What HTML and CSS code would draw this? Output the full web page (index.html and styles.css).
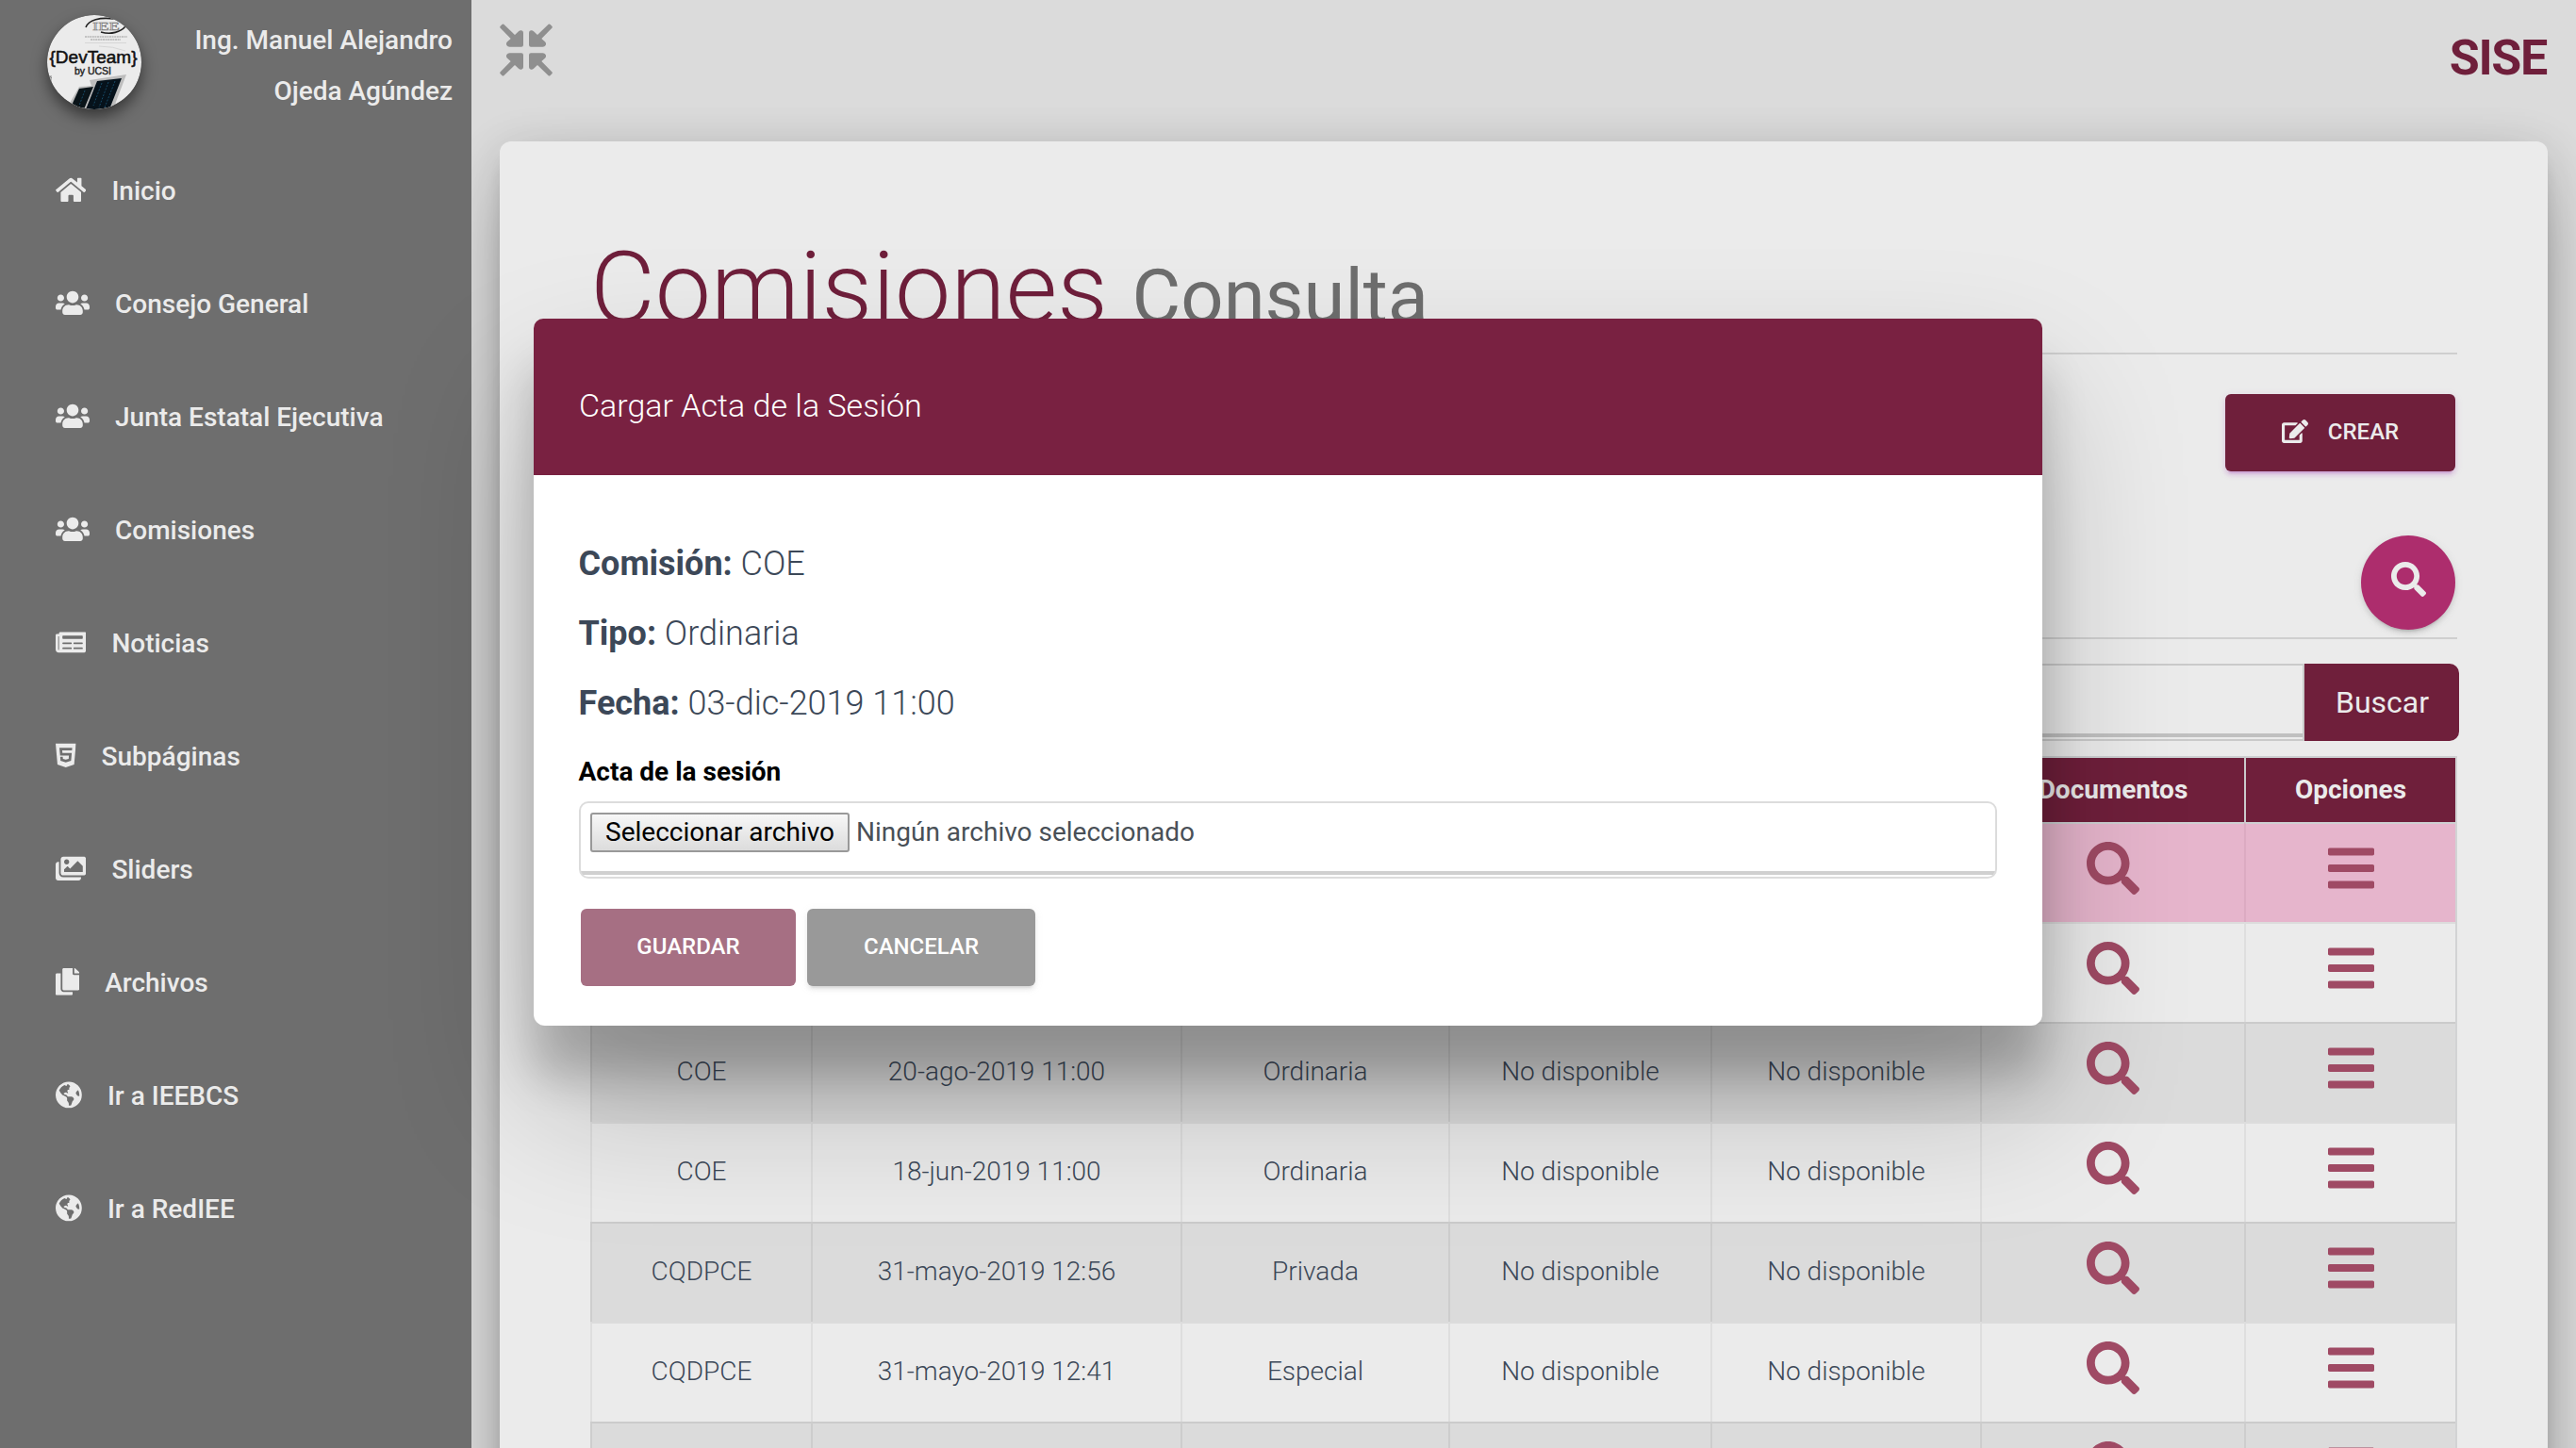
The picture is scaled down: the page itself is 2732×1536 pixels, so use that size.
FILE: index.html
```html
<!DOCTYPE html>
<html lang="es">
<head>
<meta charset="utf-8">
<title>SISE - Comisiones</title>
<link rel="stylesheet" href="styles.css">
</head>
<body>
<svg class="sprite" xmlns="http://www.w3.org/2000/svg">
  <symbol id="home" viewBox="0 0 576 512"><path d="M280.37 148.26L96 300.11V464a16 16 0 0 0 16 16l112.06-.29a16 16 0 0 0 15.92-16V368a16 16 0 0 1 16-16h64a16 16 0 0 1 16 16v95.64a16 16 0 0 0 16 16.05L464 480a16 16 0 0 0 16-16V300L295.67 148.26a12.19 12.19 0 0 0-15.3 0zM571.6 251.47L488 182.56V44.05a12 12 0 0 0-12-12h-56a12 12 0 0 0-12 12v72.61L318.47 43a48 48 0 0 0-61 0L4.34 251.47a12 12 0 0 0-1.6 16.9l25.5 31A12 12 0 0 0 45.15 301l235.22-193.74a12.19 12.19 0 0 1 15.3 0L530.9 301a12 12 0 0 0 16.9-1.6l25.5-31a12 12 0 0 0-1.7-16.93z"/></symbol>
  <symbol id="users" viewBox="0 0 640 512"><path d="M96 224c35.3 0 64-28.7 64-64s-28.7-64-64-64-64 28.7-64 64 28.7 64 64 64zm448 0c35.3 0 64-28.7 64-64s-28.7-64-64-64-64 28.7-64 64 28.7 64 64 64zm32 32h-64c-17.6 0-33.5 7.1-45.1 18.6 40.3 22.1 68.9 62 75.1 109.4h66c17.7 0 32-14.3 32-32v-32c0-35.3-28.7-64-64-64zm-256 0c61.9 0 112-50.1 112-112S381.9 32 320 32 208 82.1 208 144s50.1 112 112 112zm76.8 32h-8.3c-20.8 10-43.9 16-68.5 16s-47.6-6-68.5-16h-8.3C179.6 288 128 339.6 128 403.2V432c0 26.5 21.5 48 48 48h288c26.5 0 48-21.5 48-48v-28.8c0-63.6-51.6-115.2-115.2-115.2zm-223.7-13.4C161.5 263.1 145.6 256 128 256H64c-35.3 0-64 28.7-64 64v32c0 17.7 14.3 32 32 32h65.9c6.3-47.4 34.9-87.3 75.2-109.4z"/></symbol>
  <symbol id="news" viewBox="0 0 576 512"><path d="M552 64H88c-13.255 0-24 10.745-24 24v8H24c-13.255 0-24 10.745-24 24v272c0 30.928 25.072 56 56 56h472c26.51 0 48-21.49 48-48V88c0-13.255-10.745-24-24-24zM56 400a8 8 0 0 1-8-8V144h16v248a8 8 0 0 1-8 8zm236-16H140c-6.627 0-12-5.373-12-12v-8c0-6.627 5.373-12 12-12h152c6.627 0 12 5.373 12 12v8c0 6.627-5.373 12-12 12zm208 0H348c-6.627 0-12-5.373-12-12v-8c0-6.627 5.373-12 12-12h152c6.627 0 12 5.373 12 12v8c0 6.627-5.373 12-12 12zm-208-96H140c-6.627 0-12-5.373-12-12v-8c0-6.627 5.373-12 12-12h152c6.627 0 12 5.373 12 12v8c0 6.627-5.373 12-12 12zm208 0H348c-6.627 0-12-5.373-12-12v-8c0-6.627 5.373-12 12-12h152c6.627 0 12 5.373 12 12v8c0 6.627-5.373 12-12 12zm0-96H140c-6.627 0-12-5.373-12-12v-40c0-6.627 5.373-12 12-12h360c6.627 0 12 5.373 12 12v40c0 6.627-5.373 12-12 12z"/></symbol>
  <symbol id="html5" viewBox="0 0 384 512"><path d="M0 32l34.9 395.8L191.5 480l157.6-52.2L384 32H0zm308.2 127.9H124.4l4.1 49.4h175.6l-13.6 148.4-97.9 27v.3h-1.1l-98.7-27.3-6-75.8h47.7L138 320l53.5 14.5 53.7-14.5 6-62.2H84.3L71.5 112.2h241.1l-4.4 47.7z"/></symbol>
  <symbol id="images" viewBox="0 0 576 512"><path d="M480 416v16c0 26.51-21.49 48-48 48H48c-26.51 0-48-21.49-48-48V176c0-26.51 21.49-48 48-48h16v208c0 44.112 35.888 80 80 80h336zm96-80V80c0-26.51-21.49-48-48-48H144c-26.51 0-48 21.49-48 48v256c0 26.51 21.49 48 48 48h384c26.51 0 48-21.49 48-48zM256 128c0 26.51-21.49 48-48 48s-48-21.49-48-48 21.49-48 48-48 48 21.49 48 48zm-96 144l55.515-55.515c4.686-4.686 12.284-4.686 16.971 0L272 256l135.515-135.515c4.686-4.686 12.284-4.686 16.971 0L512 208v112H160v-48z"/></symbol>
  <symbol id="copy" viewBox="0 0 448 512"><path d="M320 448v40c0 13.255-10.745 24-24 24H24c-13.255 0-24-10.745-24-24V120c0-13.255 10.745-24 24-24h72v296c0 30.879 25.121 56 56 56h168zm0-344V0H152c-13.255 0-24 10.745-24 24v368c0 13.255 10.745 24 24 24h272c13.255 0 24-10.745 24-24V128H344c-13.2 0-24-10.8-24-24zm120.971-31.029L375.029 7.029A24 24 0 0 0 358.059 0H352v96h96v-6.059a24 24 0 0 0-7.029-16.97z"/></symbol>
  <symbol id="globe" viewBox="0 0 496 512"><path d="M248 8C111.03 8 0 119.03 0 256s111.03 248 248 248 248-111.03 248-248S384.97 8 248 8zm82.29 357.6c-3.9 3.88-7.99 7.95-11.31 11.28-2.99 3-5.1 6.7-6.17 10.71-1.51 5.66-2.73 11.38-4.77 16.87l-17.39 46.85c-13.76 3-28 4.69-42.65 4.69v-27.38c1.69-12.62-7.64-36.26-22.63-51.25-6-6-9.37-14.14-9.37-22.63v-32.01c0-11.64-6.27-22.34-16.46-27.97-14.37-7.95-34.81-19.06-48.81-26.11-11.48-5.78-22.1-13.14-31.65-21.75l-.8-.72a114.792 114.792 0 0 1-18.06-20.74c-9.38-13.77-24.66-36.42-34.59-51.14 20.47-45.5 57.36-82.04 103.2-101.89l24.01 12.01C203.48 89.74 216 82.01 216 70.11v-11.3c7.99-1.29 16.12-2.11 24.39-2.42l28.3 28.3c6.25 6.25 6.25 16.38 0 22.63L264 112l-10.34 10.34c-3.12 3.12-3.12 8.19 0 11.31l4.69 4.69c3.12 3.12 3.12 8.19 0 11.31l-8 8a8.008 8.008 0 0 1-5.66 2.34h-8.99c-2.08 0-4.08.81-5.58 2.27l-9.92 9.65a8.008 8.008 0 0 0-1.58 9.31l15.59 31.19c2.66 5.32-1.21 11.58-7.15 11.58h-5.64c-1.93 0-3.79-.7-5.24-1.96l-9.28-8.06a16.017 16.017 0 0 0-15.55-3.1l-31.17 10.39a11.95 11.95 0 0 0-8.17 11.34c0 4.53 2.56 8.66 6.61 10.69l11.08 5.54c9.41 4.71 19.79 7.16 30.31 7.16s22.59 27.29 32 32h66.75c8.49 0 16.62 3.37 22.63 9.37l13.69 13.69a30.503 30.503 0 0 1 8.93 21.57 46.536 46.536 0 0 1-13.72 32.98zM417 274.25c-5.79-1.45-10.84-5-14.15-9.97l-17.98-26.97a23.97 23.97 0 0 1 0-26.62l19.59-29.38c2.32-3.47 5.5-6.29 9.24-8.15l12.98-6.49C440.2 193.59 448 223.87 448 256c0 8.67-.74 17.16-1.82 25.54L417 274.25z"/></symbol>
  <symbol id="search" viewBox="0 0 512 512"><path d="M505 442.7L405.3 343c-4.5-4.5-10.6-7-17-7H372c27.6-35.3 44-79.7 44-128C416 93.1 322.9 0 208 0S0 93.1 0 208s93.1 208 208 208c48.3 0 92.7-16.4 128-44v16.3c0 6.4 2.5 12.5 7 17l99.7 99.7c9.4 9.4 24.6 9.4 33.9 0l28.3-28.3c9.4-9.4 9.4-24.6.1-34zM208 336c-70.7 0-128-57.2-128-128 0-70.7 57.2-128 128-128 70.7 0 128 57.2 128 128 0 70.7-57.2 128-128 128z"/></symbol>
  <symbol id="bars" viewBox="0 0 448 512"><path d="M16 132h416c8.837 0 16-7.163 16-16V76c0-8.837-7.163-16-16-16H16C7.163 60 0 67.163 0 76v40c0 8.837 7.163 16 16 16zm0 160h416c8.837 0 16-7.163 16-16v-40c0-8.837-7.163-16-16-16H16c-8.837 0-16 7.163-16 16v40c0 8.837 7.163 16 16 16zm0 160h416c8.837 0 16-7.163 16-16v-40c0-8.837-7.163-16-16-16H16c-8.837 0-16 7.163-16 16v40c0 8.837 7.163 16 16 16z"/></symbol>
  <symbol id="edit" viewBox="0 0 576 512"><path d="M402.6 83.2l90.2 90.2c3.8 3.8 3.8 10 0 13.8L274.4 405.6l-92.8 10.3c-12.4 1.4-22.9-9.1-21.5-21.5l10.3-92.8L388.8 83.2c3.8-3.8 10-3.8 13.8 0zm162-22.9l-48.8-48.8c-15.2-15.2-39.9-15.2-55.2 0l-35.4 35.4c-3.8 3.8-3.8 10 0 13.8l90.2 90.2c3.8 3.8 10 3.8 13.8 0l35.4-35.4c15.2-15.3 15.2-40 0-55.2zM384 346.2V448H64V128h229.8c3.2 0 6.2-1.3 8.5-3.5l40-40c7.6-7.6 2.2-20.5-8.5-20.5H48C21.5 64 0 85.5 0 112v352c0 26.5 21.5 48 48 48h352c26.5 0 48-21.5 48-48V306.2c0-10.7-12.9-16-20.5-8.5l-40 40c-2.2 2.3-3.5 5.3-3.5 8.5z"/></symbol>
  <symbol id="compress" viewBox="0 0 168 168">
    <g id="arrow"><path d="M13 2Q10 0 7 3L2 8Q-1 11 2 14L35 48L24 58Q19 63 22 69Q25 74 31 74H69Q75 74 75 68V29Q75 23 69 22Q64 21 60 25L48 36Z"/></g>
    <use href="#arrow" transform="matrix(-1 0 0 1 168 0)"/>
    <use href="#arrow" transform="matrix(1 0 0 -1 0 168)"/>
    <use href="#arrow" transform="matrix(-1 0 0 -1 168 168)"/>
  </symbol>
</svg>

<div class="app">
  <aside class="sidebar">
    <div class="user">
      <svg class="avatar" viewBox="0 0 100 100">
        <defs><clipPath id="round"><circle cx="50" cy="50" r="50"/></clipPath></defs>
        <g clip-path="url(#round)">
          <rect width="100" height="100" fill="#ebebeb"/>
          <path d="M41 13c3-8 15-11 30-9M57 18c11 3 21 0 26-6" fill="none" stroke="#222" stroke-width="1.6"/>
          <text x="48" y="16" class="mini-logo" textLength="29" lengthAdjust="spacingAndGlyphs">IEE</text>
          <path d="M40 23h45M46 26h32" stroke="#999" stroke-width="1.2" stroke-dasharray="2 .6"/>
          <path d="M40 29.500h44M55 33q15 0 28 5" stroke="#d6d6d6" fill="none"/>
          <path d="M0 62l5 5M4 64v8" stroke="#888" fill="none"/>
          <path d="M45 69L84 63 70 100H20L34 76l13-1z" fill="#bdbdbd"/>
          <path d="M34 78l15-2-10 24H24z" fill="#0a1419"/>
          <path d="M53 70l26-3-13 33H41z" fill="#06121b"/>
          <path d="M58 72l-9 24M65 71l-10 27M72 70L61 98M40 80l-6 16" stroke="#174a66" stroke-width="1" stroke-dasharray="2 1.500"/>
          <text x="2.500" y="51" class="team" textLength="93" lengthAdjust="spacingAndGlyphs">{DevTeam}</text>
          <text x="29" y="63" class="team-by" textLength="39" lengthAdjust="spacingAndGlyphs">by UCSI</text>
        </g>
      </svg>
      <div class="user-name">Ing. Manuel Alejandro<br>Ojeda Agúndez</div>
    </div>
    <nav class="menu">
      <a><svg class="w576"><use href="#home"/></svg>Inicio</a>
      <a><svg class="w640"><use href="#users"/></svg>Consejo General</a>
      <a><svg class="w640"><use href="#users"/></svg>Junta Estatal Ejecutiva</a>
      <a><svg class="w640"><use href="#users"/></svg>Comisiones</a>
      <a><svg class="w576"><use href="#news"/></svg>Noticias</a>
      <a><svg class="w384"><use href="#html5"/></svg>Subpáginas</a>
      <a><svg class="w576"><use href="#images"/></svg>Sliders</a>
      <a><svg class="w448"><use href="#copy"/></svg>Archivos</a>
      <a><svg class="w496"><use href="#globe"/></svg>Ir a IEEBCS</a>
      <a><svg class="w496"><use href="#globe"/></svg>Ir a RedIEE</a>
    </nav>
  </aside>

  <main class="main">
    <header class="topbar">
      <svg class="toggle"><use href="#compress"/></svg>
      <span class="brand">SISE</span>
    </header>
    <section class="card">
      <h1 class="heading">Comisiones <small>Consulta</small></h1>
      <div class="actions">
        <button class="btn create"><svg><use href="#edit"/></svg>CREAR</button>
        <button class="round-btn"><svg><use href="#search"/></svg></button>
      </div>
      <div class="search">
        <div class="field"></div>
        <button class="search-btn">Buscar</button>
      </div>
      <table class="grid">
        <colgroup><col class="c1"><col class="c2"><col class="c3"><col class="c4"><col class="c5"><col class="c6"><col class="c7"></colgroup>
        <thead><tr><th></th><th></th><th></th><th></th><th></th><th>Documentos</th><th>Opciones</th></tr></thead>
        <tbody>
          <tr class="pink"><td></td><td></td><td></td><td></td><td></td><td><svg class="lens"><use href="#search"/></svg></td><td><svg class="lines"><use href="#bars"/></svg></td></tr>
          <tr><td></td><td></td><td></td><td></td><td></td><td><svg class="lens"><use href="#search"/></svg></td><td><svg class="lines"><use href="#bars"/></svg></td></tr>
          <tr class="gray"><td>COE</td><td>20-ago-2019 11:00</td><td>Ordinaria</td><td>No disponible</td><td>No disponible</td><td><svg class="lens"><use href="#search"/></svg></td><td><svg class="lines"><use href="#bars"/></svg></td></tr>
          <tr><td>COE</td><td>18-jun-2019 11:00</td><td>Ordinaria</td><td>No disponible</td><td>No disponible</td><td><svg class="lens"><use href="#search"/></svg></td><td><svg class="lines"><use href="#bars"/></svg></td></tr>
          <tr class="gray"><td>CQDPCE</td><td>31-mayo-2019 12:56</td><td>Privada</td><td>No disponible</td><td>No disponible</td><td><svg class="lens"><use href="#search"/></svg></td><td><svg class="lines"><use href="#bars"/></svg></td></tr>
          <tr><td>CQDPCE</td><td>31-mayo-2019 12:41</td><td>Especial</td><td>No disponible</td><td>No disponible</td><td><svg class="lens"><use href="#search"/></svg></td><td><svg class="lines"><use href="#bars"/></svg></td></tr>
          <tr class="gray"><td></td><td></td><td></td><td></td><td></td><td><svg class="lens"><use href="#search"/></svg></td><td><svg class="lines"><use href="#bars"/></svg></td></tr>
        </tbody>
      </table>
    </section>
  </main>

  <div class="modal">
    <div class="modal-head">Cargar Acta de la Sesión</div>
    <div class="modal-body">
      <p><b>Comisión:</b> COE</p>
      <p><b>Tipo:</b> Ordinaria</p>
      <p><b>Fecha:</b> 03-dic-2019 11:00</p>
      <label class="label">Acta de la sesión</label>
      <div class="file"><span class="file-btn">Seleccionar archivo</span><span>Ningún archivo seleccionado</span></div>
      <div class="buttons">
        <button class="btn save">GUARDAR</button>
        <button class="btn cancel">CANCELAR</button>
      </div>
    </div>
  </div>
</div>
</body>
</html>
```
FILE: styles.css
```css
* { box-sizing: border-box; }
html, body { margin: 0; height: 1536px; overflow: hidden; }
body { font: 300 28px/1.5 Roboto, sans-serif; color: #3c4858; background: #dbdbdb; }
button { border: 0; padding: 0; margin: 0; font: inherit; }
svg { fill: currentColor; display: block; flex: none; }
.sprite { display: none; }

.app { position: relative; display: flex; width: 2732px; height: 1536px; overflow: hidden; }

/* Sidebar */
.sidebar { position: relative; z-index: 1; width: 500px; flex: none; background: #6e6e6e; color: #ebebeb; font-weight: 500; }
.user { display: flex; justify-content: space-between; height: 143px; padding: 16px 20px 0 50px; }
.avatar { width: 100px; height: 100px; border-radius: 50%; box-shadow: 0 8px 16px rgba(0, 0, 0, .5); }
.team { font: 17.5px "Liberation Sans", sans-serif; fill: #111; stroke: #111; stroke-width: .5px; }
.team-by { font: 10px "Liberation Sans", sans-serif; fill: #222; stroke: #222; stroke-width: .4px; }
.mini-logo { font: 13px "Liberation Serif", serif; fill: #ddd; stroke: #777; stroke-width: .5px; }
.user-name { line-height: 54px; text-align: right; }
.menu a { display: flex; align-items: center; gap: 27px; height: 120px; padding-left: 59px; }
.menu svg { height: 28.8px; margin-bottom: 3px; }
.w640 { width: 36px; }
.w576 { width: 32.4px; }
.w496 { width: 27.9px; }
.w448 { width: 25.2px; }
.w384 { width: 21.6px; }

/* Page */
.main { flex: 1; padding: 0 30px; }
.topbar { display: flex; justify-content: space-between; height: 150px; }
.toggle { width: 56px; height: 56px; margin-top: 25px; color: #8f8f8f; }
.brand { font-size: 52px; line-height: 60px; margin: 32px 1px 0 0; font-weight: 700; letter-spacing: -1.3px; color: #6f1f3b; }
.card {
  height: 1500px; padding: 93px 96px 0; border-radius: 12px; background: #ebebeb;
  box-shadow: 0 32px 76px -24px rgba(0, 0, 0, .44), 0 8px 50px rgba(0, 0, 0, .12), 0 16px 20px -10px rgba(0, 0, 0, .2);
}
.heading { margin: 0; height: 133px; font-size: 105.8px; line-height: 126px; font-weight: 300; color: #6f1f3b; border-bottom: 2px solid #cfcfcf; }
.heading small { font-size: 79.5px; font-weight: 400; color: #6e6e6e; }
.actions { display: flex; flex-direction: column; align-items: flex-end; height: 302px; padding: 42px 2px 0 0; border-bottom: 2px solid #cfcfcf; }
.btn { display: flex; align-items: center; justify-content: center; height: 82px; padding-bottom: 3px; border-radius: 6px; font-size: 24px; font-weight: 500; color: #fff; }
.create {
  width: 244px; gap: 21px; background: #6f1f3b; color: #ebebeb;
  box-shadow: 0 4px 4px rgba(156, 39, 176, .14), 0 6px 2px -4px rgba(156, 39, 176, .2), 0 2px 10px rgba(156, 39, 176, .12);
}
.create svg { width: 28px; height: 25px; }
.round-btn {
  display: flex; align-items: center; justify-content: center; width: 100px; height: 100px; margin-top: 68px; padding-bottom: 7px; border-radius: 50%;
  background: #ad2d6d; color: #ebebeb;
  box-shadow: 0 4px 4px rgba(100, 100, 100, .14), 0 6px 2px -4px rgba(100, 100, 100, .2), 0 2px 10px rgba(100, 100, 100, .12);
}
.round-btn svg { width: 37px; height: 37px; }
.search { display: flex; height: 82px; margin: 26px -2px 16px 0; }
.field { flex: 1; border: 2px solid #cacaca; border-radius: 10px 0 0 10px; background: linear-gradient(#c0c0c0, #c0c0c0) 0 calc(100% - 2px) / 100% 4px no-repeat; }
.search-btn { width: 164px; padding-left: 1px; border-radius: 0 10px 10px 0; background: #6f1f3b; color: #ebebeb; font-size: 32px; font-weight: 400; }

.grid { width: 1980px; table-layout: fixed; border-spacing: 0; text-align: center; border-right: 2px solid #d2d3d4; }
.c1 { width: 234px; }
.c2 { width: 392px; }
.c3 { width: 284px; }
.c4 { width: 278px; }
.c5 { width: 286px; }
.c6 { width: 280px; }
.c7 { width: 224px; }
.grid th { height: 70px; padding: 0 0 1px; border-top: 2px solid #cdcfd1; border-left: 2px solid #c9cacc; background: #6f1f3b; background-clip: padding-box; color: #ebebeb; font-weight: 700; }
.grid td { height: 106px; padding: 0 0 3px; border-top: 2px solid #dcdcdc; border-left: 2px solid #dedede; }
.grid .gray td { border-top-color: #cbcbcb; border-left-color: #cdcdcd; background: #dbdbdb; }
.grid .pink td { border-top-color: #cdcfd1; border-left-color: #dcabc2; background: #e6b5cc; }
.lens, .lines { margin: 0 auto 7px; height: 56px; color: #9f4a64; }
.lens { width: 56px; }
.lines { width: 49px; }

/* Modal */
.modal {
  position: absolute; z-index: 2; left: 566px; top: 338px; width: 1600px; height: 750px; border-radius: 12px; background: #fff;
  box-shadow: 0 54px 48px rgba(0, 0, 0, .2), 0 80px 154px rgba(0, 0, 0, .22);
}
.modal-head { height: 166px; padding: 18px 48px 0; border-radius: 10px 10px 0 0; background: #792141; color: #fff; font-size: 34px; line-height: 148px; }
.modal-body { padding: 69px 48px 0; }
.modal-body p { margin: 0 0 24px -.5px; font-size: 36px; line-height: 50px; }
.modal-body b { font-weight: 700; }
.label { display: block; padding-top: 3px; font-weight: 700; line-height: 42px; margin-left: -.5px; color: #000; }
.file {
  display: flex; align-items: flex-start; gap: 7px; height: 82px; margin-top: 10px; padding: 10px; border: 2px solid #dcdcdc; border-radius: 10px;
  background: linear-gradient(#d0d0d0, #d0d0d0) 0 calc(100% - 2px) / 100% 4px no-repeat; color: #495057; font-weight: 400; line-height: 41px;
}
.file-btn { height: 42px; padding: 0 14px; border: 2px solid #999; border-radius: 3px; background: linear-gradient(#f7f7f7, #dcdcdc); color: #000; line-height: 37px; }
.buttons { display: flex; gap: 12px; padding: 32px 2px 0; }
.save { width: 228px; background: #a66f83; }
.cancel { width: 242px; background: #999; box-shadow: 0 4px 4px rgba(153, 153, 153, .14), 0 6px 2px -4px rgba(153, 153, 153, .2), 0 2px 10px rgba(153, 153, 153, .12); }
```
